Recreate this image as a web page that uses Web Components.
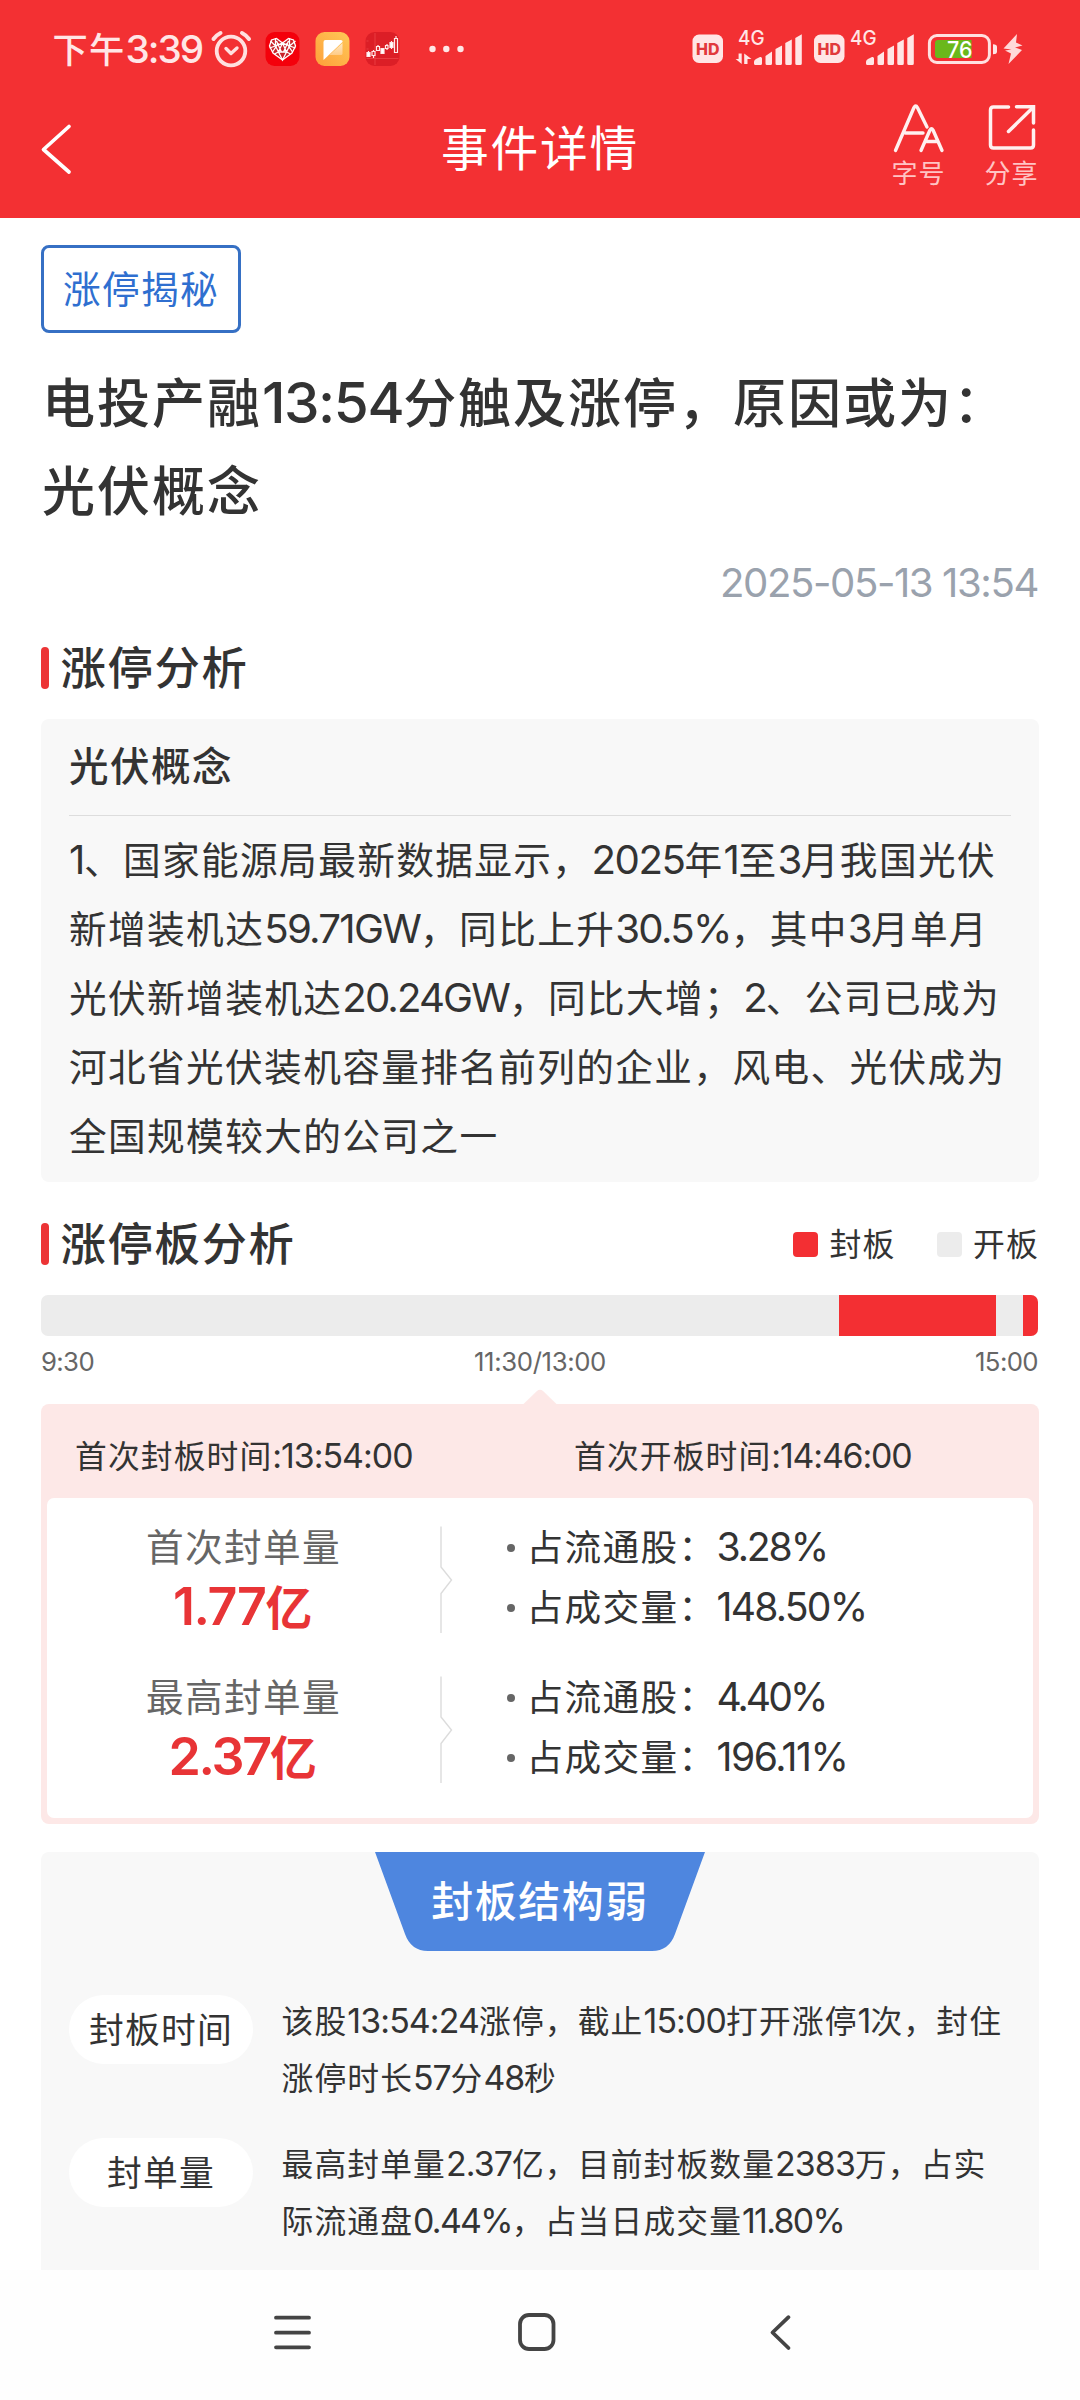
<!DOCTYPE html>
<html lang="zh-CN">
<head>
<meta charset="utf-8">
<title>事件详情</title>
<style>
html,body{margin:0;padding:0;background:#fff}
body{width:1080px;height:2400px;overflow:hidden;font-family:"Noto Sans CJK SC",sans-serif;color:#333}
</style>
</head>
<body>
<event-page></event-page>
<script>
const define=(name,html,init)=>{
  const tpl=document.createElement('template');
  tpl.innerHTML=html;
  customElements.define(name,class extends HTMLElement{
    constructor(){super();this.attachShadow({mode:'open'}).append(tpl.content.cloneNode(true));}
    connectedCallback(){if(init)init(this,this.shadowRoot);}
  });
};

/* One line of mixed text. p: advance of a Chinese character, h: box height,
   w: total width, reached by tracking the Latin runs. */
define('mix-text',`<style>
:host{display:block;white-space:nowrap;flex:none}
.line{display:inline-block;vertical-align:top;white-space:pre}
.l{font-family:Inter,"Noto Sans CJK SC",sans-serif;line-height:0}
</style><span class="line"></span>`,(el,root)=>{
  const text=el.getAttribute('text');
  if(!text)return;
  const p=+el.getAttribute('p'),h=+el.getAttribute('h'),w=+el.getAttribute('w'),k=+(el.getAttribute('k')||1.03);
  const line=root.querySelector('.line');
  line.textContent='';
  el.style.height=h+'px';
  line.style.fontSize=p*.965+'px';
  line.style.letterSpacing=p*.035+'px';
  line.style.lineHeight=h-p*.11+'px';
  const latin=[];let n=0;
  for(const part of text.match(/[\x20-\x7e]+|[^\x20-\x7e]+/g)){
    const s=document.createElement('span');
    s.textContent=part;
    if(/[\x20-\x7e]/.test(part)){s.className='l';s.style.fontSize=p*k+'px';s.style.letterSpacing='0';latin.push(s);n+=part.length;}
    line.append(s);
  }
  if(w&&n){
    const d=(w-line.getBoundingClientRect().width)/n;
    latin.forEach(s=>s.style.letterSpacing=d+'px');
  }
});

define('status-bar',`<style>
:host{display:flex;height:97px;color:#ffe6e6;align-items:flex-start}
mix-text{margin:31px 0 0 52.5px;width:152px;font-weight:500}
svg{display:block;flex:none}
.r{margin-left:auto}
text{font-family:Inter,sans-serif}
</style>
<mix-text text="下午3:39" p="36.5" h="37" w="149.500" k="1.06"></mix-text>
<svg width="270" height="97" viewBox="204.5 0 270 97" fill="none">
 <g stroke="#ffe0e0" stroke-linecap="round" stroke-linejoin="round">
  <circle cx="230.5" cy="51" r="14.3" stroke-width="3.8"/>
  <path d="M225.5 48.5l5 5 6-5.5" stroke-width="3.4"/>
  <path d="M213 39q3-4 7-6M248.500 39q-3-4-7-6" stroke-width="4"/>
 </g>
 <rect x="265" y="32" width="34" height="34" rx="9" fill="#f4000b"/>
 <g stroke="#fff" stroke-width="1.300">
  <path fill="#c9232a" d="M282 60l-9.500-7-3.500-7 2-6 5-1.500 6 4.500 6-4.500 5 1.500 2 6-3.500 7z"/>
  <path d="M270 41l5 5 7-3 7 3 6-5M269 48l6-2 3 6 4-9 4 9 3-6 6 2M274 54l4-2h8l4 2M278 52l4 8 4-8M275 38v8M289 38v8M276 41l5 11M288 41l-5 11M272 52l6-9M292 52l-6-9"/>
 </g>
 <defs><linearGradient id="o" x1="0" y1="1" x2="1" y2="0"><stop offset="0" stop-color="#fea03a"/><stop offset="1" stop-color="#ffc857"/></linearGradient>
 <linearGradient id="q" x1="0" y1="0" x2="0" y2="1"><stop offset="0" stop-color="#ffe9c4"/><stop offset="1" stop-color="#ffcb86"/></linearGradient></defs>
 <rect x="315" y="32" width="34" height="34" rx="9" fill="url(#o)"/>
 <path d="M342 43v10.500q0 1.500-1.500 1.500H329z" fill="url(#q)"/>
 <path d="M323 42q0-2 2-2h15q2.500 0 2 2L323 60z" fill="#fff"/>
 <rect x="365" y="32" width="34" height="34" rx="9" fill="#dc1e26"/>
 <path d="M374.500 33v32M366 58.500h32M366 41h2M366 49h2" stroke="#ee4348" stroke-width=".8"/>
 <g stroke="#ffe9e9" stroke-width="1.200">
  <path d="M368 51v2M373 50v8M377.500 45v6M386.500 44v6M391 41v8M395.500 36v17"/>
  <path fill="#fff" d="M366.500 52.500h3v4h-3zM380.500 48.500h3v5h-3zM389.500 42.500h3v5h-3z"/>
  <path fill="#dc1e26" d="M371.500 51.500h3v4h-3zM376 46.500h3v4h-3zM385 45.500h2.500v3h-2.500zM394 38.500h3v14h-3z"/>
 </g>
 <g fill="#ffe6e6"><circle cx="432" cy="49" r="3.200"/><circle cx="445.800" cy="49" r="3.200"/><circle cx="460" cy="49" r="3.200"/></g>
</svg>
<svg class="r" width="400" height="97" viewBox="680 0 400 97" fill="#ffe6e6">
 <rect x="692.500" y="34.500" width="30.500" height="28.500" rx="6.500"/>
 <text x="707.800" y="54.700" font-size="15.500" font-weight="800" fill="#e1393c" text-anchor="middle" textLength="23.500" lengthAdjust="spacingAndGlyphs">HD</text>
 <text x="738" y="45" font-size="20" font-weight="500" textLength="26.500" lengthAdjust="spacingAndGlyphs">4G</text>
 <path d="M741.700 53.500V64L735.600 59h3v-5.500zM744.200 64V53.500l7.300 5.500h-4v5z"/>
 <path d="M754 62q0-2 2-3l4-2q2-.5 2 1.500V63.500q0 1.500-1.500 1.500H755.500q-1.500 0-1.500-1.500zM765.500 56l6.500-4.500V63.500q0 1.500-1.500 1.500H767q-1.500 0-1.500-1.500zM775.500 49l6.500-3.500v18q0 1.500-1.500 1.500H777q-1.500 0-1.500-1.500zM785.300 43l6.500-3.500v24q0 1.500-1.500 1.500H786.800q-1.500 0-1.500-1.500zM795.300 38l6.500-3.800v29.300q0 1.500-1.500 1.500H796.800q-1.500 0-1.500-1.500z"/>
 <rect x="814" y="34.500" width="30.500" height="28.500" rx="6.500"/>
 <text x="829.200" y="54.700" font-size="15.500" font-weight="800" fill="#e1393c" text-anchor="middle" textLength="23.500" lengthAdjust="spacingAndGlyphs">HD</text>
 <text x="850" y="45" font-size="20" font-weight="500" textLength="26.500" lengthAdjust="spacingAndGlyphs">4G</text>
 <path transform="translate(112 0)" d="M754 62q0-2 2-3l4-2q2-.5 2 1.500V63.500q0 1.500-1.500 1.500H755.500q-1.500 0-1.500-1.500zM765.500 56l6.500-4.500V63.500q0 1.500-1.500 1.500H767q-1.500 0-1.500-1.500zM775.500 49l6.500-3.500v18q0 1.500-1.500 1.500H777q-1.500 0-1.500-1.500zM785.300 43l6.500-3.500v24q0 1.500-1.500 1.500H786.800q-1.500 0-1.500-1.500zM795.300 38l6.500-3.800v29.300q0 1.500-1.500 1.500H796.800q-1.500 0-1.500-1.500z"/>
 <rect x="929.400" y="35.500" width="60" height="27" rx="7.500" fill="none" stroke="#ffe0e0" stroke-width="3"/>
 <path d="M938 40h33.500v18H938q-3 0-3-3V43q0-3 3-3z" fill="#6ab81b"/>
 <path d="M993 44.300q4 0 4 2.500v5q0 2.500-4 2.500z"/>
 <text x="947" y="58" font-size="23.500" font-weight="500" fill="#fff" textLength="25.500" lengthAdjust="spacingAndGlyphs">76</text>
 <path d="M1017 34l-13.500 14.500 8 1-6.500 1 6 3L1008.500 64l13.500-14-7-2.500 7.500-2-6.500-3z" fill="#ffd9d9"/>
</svg>`);

define('nav-header',`<style>
:host{display:flex;height:120.500px;color:#fff}
.side{flex:1 1 0;min-width:0;display:flex;box-sizing:border-box}
.left{padding-right:42px}
.right{justify-content:flex-end;gap:40px;padding-right:42px}
.title{margin-top:22px}
.act{display:flex;flex-direction:column;align-items:center;width:53px;color:#ffc4c4}
svg{display:block}
.back{margin:24px 0 0 38px}
.act svg{margin-top:4px}
.act mix-text{margin-top:4px}
</style>
<div class="side left"><svg class="back" width="36" height="56" fill="none" stroke="#fff" stroke-width="3.700" stroke-linecap="round" stroke-linejoin="round"><path d="M31 5.500L5.500 28.500 31 51"/></svg></div>
<mix-text class="title" text="事件详情" p="49.500" h="60"></mix-text>
<div class="side right">
 <div class="act"><svg width="53" height="54" fill="none" stroke="#fff0f0" stroke-width="3.400" stroke-linecap="round" stroke-linejoin="round"><path d="M3.500 49.500L22 6.500q1.700-3 3.400 0L35 26M13.500 32H31M29 49.500l9-20.500q1.500-2.500 3 0l9 20.500M33.500 40.500h12"/></svg><mix-text text="字号" p="27" h="30"></mix-text></div>
 <div class="act"><svg width="53" height="54" fill="none" stroke="#fff0f0" stroke-width="3.500"><path d="M23.500 6H8.500Q5.500 6 5.500 9V44q0 3 3 3h37q3 0 3-3V29" stroke-linecap="round"/><path d="M31.500 5.800H48.500V22" stroke-linecap="round"/><path d="M47.500 7L23.500 30.500" stroke-linecap="round"/></svg><mix-text text="分享" p="27" h="30"></mix-text></div>
</div>`);

define('section-title',`<style>
:host{display:flex;align-items:center;height:50px}
i{width:8px;height:42px;border-radius:4px;background:#ec3436;margin-right:11.500px}
mix-text{font-weight:500}
slot{display:block}
.end{margin-left:auto;display:flex;align-items:center}
</style><i></i><mix-text p="47" h="50"></mix-text><div class="end"><slot></slot></div>`,(el,root)=>{
  const t=root.querySelector('mix-text');
  t.setAttribute('text',el.getAttribute('text'));
  t.connectedCallback();
});

define('legend-item',`<style>
:host{display:inline-flex;align-items:center;height:40px;margin-left:41px}
i{width:25px;height:25px;border-radius:4px;background:var(--c);margin-right:11.500px}
</style><i></i><slot></slot>`);

define('time-bar',`<style>
:host{display:block}
.bar{display:flex;height:41px;width:997px;border-radius:7px;overflow:hidden;background:#ececec}
.bar b{background:#f32f33}
.t{display:flex;justify-content:space-between;margin-top:11px;color:#666;width:997px}
.mid{margin-right:-11px}
</style>
<div class="bar"><span style="width:798px"></span><b style="width:157px"></b><span style="width:27px"></span><b style="width:15px"></b></div>
<div class="t"><mix-text text="9:30" p="25" h="30" w="53"></mix-text><mix-text class="mid" text="11:30/13:00" p="25" h="30" w="132"></mix-text><mix-text text="15:00" p="25" h="30" w="63"></mix-text></div>`);

define('seal-row',`<style>
:host{display:flex;height:150px}
.l{width:393px;display:flex;flex-direction:column;align-items:center}
.l slot{display:block}
svg{display:block;flex:none;margin-top:8px}
.r{margin-left:54px}
.i{display:flex;align-items:center;height:60px}
.i u{width:8px;height:8px;border-radius:50%;background:#666;margin-right:11.500px}
</style>
<div class="l"><slot name="label"></slot><slot name="value"></slot></div>
<svg width="13" height="108" fill="none" stroke="#dcdcdc" stroke-width="1.400"><path d="M1 .5V41L11.500 54 1 67.500V107"/></svg>
<div class="r"><div class="i"><u></u><slot name="x"></slot></div><div class="i"><u></u><slot name="y"></slot></div></div>`);

define('seal-panel',`<style>
:host{display:block}
svg{display:block;margin:0 auto}
.box{background:#fde8e7;border-radius:8px;padding:0 6px 6px}
.head{display:flex;height:94px}
.head mix-text{margin:30px 0 0}
.head .first{margin-left:28px;width:499px}
.white{background:#fff;border-radius:7px;padding-top:20px;height:300px}
.v{color:#e83436;font-weight:600}
.k{color:#666}
</style>
<svg width="36" height="15"><path d="M1 15.500L15 2q3-2.500 6 0L35 15.500z" fill="#fde8e7"/></svg>
<div class="box">
<div class="head"><mix-text class="first" text="首次封板时间:13:54:00" p="32.900" h="44" w="337.500"></mix-text><mix-text text="首次开板时间:14:46:00" p="32.900" h="44" w="337.500"></mix-text></div>
<div class="white">
<seal-row><mix-text slot="label" class="k" text="首次封单量" p="39" h="58"></mix-text><mix-text slot="value" class="v" text="1.77亿" p="48.500" h="64" w="141" k="1.07"></mix-text>
<mix-text slot="x" text="占流通股：3.28%" p="38" h="58" w="300.500"></mix-text><mix-text slot="y" text="占成交量：148.50%" p="38" h="58" w="340"></mix-text></seal-row>
<seal-row><mix-text slot="label" class="k" text="最高封单量" p="39" h="58"></mix-text><mix-text slot="value" class="v" text="2.37亿" p="48.500" h="64" w="150" k="1.07"></mix-text>
<mix-text slot="x" text="占流通股：4.40%" p="38" h="58" w="299"></mix-text><mix-text slot="y" text="占成交量：196.11%" p="38" h="58" w="321"></mix-text></seal-row>
</div></div>`);

define('fact-row',`<style>
:host{display:flex;padding:0 28px;height:143px}
.pill{width:184px;height:69px;border-radius:34.500px;background:#fff;display:flex;justify-content:center;align-items:center;margin-right:28.500px;flex:none}
.d{margin-top:-2px}
</style><div class="pill"><slot name="k"></slot></div><div class="d"><slot></slot></div>`);

define('strength-card',`<style>
:host{display:block;background:#f8f8f8;border-radius:8px 8px 0 0;height:418px;overflow:hidden}
.badge{width:330px;height:99px;margin:0 auto 44px;display:grid;justify-items:center;color:#fff;font-weight:500}
.badge>*{grid-area:1/1}
.badge mix-text{margin-top:20px}
</style>
<div class="badge"><svg width="330" height="99"><path d="M0 0H330L300 82Q294 99 277 99H53Q36 99 30 82z" fill="#4e86df"/></svg><mix-text text="封板结构弱" p="43.500" h="58"></mix-text></div>
<fact-row><mix-text slot="k" text="封板时间" p="36" h="60"></mix-text><mix-text text="该股13:54:24涨停，截止15:00打开涨停1次，封住" p="32.900" h="57" w="720.500"></mix-text><mix-text text="涨停时长57分48秒" p="32.900" h="57" w="275.500"></mix-text></fact-row>
<fact-row><mix-text slot="k" text="封单量" p="36" h="60"></mix-text><mix-text text="最高封单量2.37亿，目前封板数量2383万，占实" p="32.900" h="57" w="705"></mix-text><mix-text text="际流通盘0.44%，占当日成交量11.80%" p="32.900" h="57" w="562.500"></mix-text></fact-row>`);

define('reason-card',`<style>
:host{display:block;box-sizing:border-box;background:#f8f8f8;border-radius:8px;height:463px;padding:20px 28px 0}
.h{font-weight:500;border-bottom:1px solid #ddd;padding-bottom:21px;margin-bottom:10px}
</style>
<mix-text class="h" text="光伏概念" p="41" h="55"></mix-text>
<mix-text text="1、国家能源局最新数据显示，2025年1至3月我国光伏" p="39.050" h="69" w="927"></mix-text>
<mix-text text="新增装机达59.71GW，同比上升30.5%，其中3月单月" p="39.050" h="69" w="919"></mix-text>
<mix-text text="光伏新增装机达20.24GW，同比大增；2、公司已成为" p="39.050" h="69" w="931"></mix-text>
<mix-text text="河北省光伏装机容量排名前列的企业，风电、光伏成为" p="39.030" h="69"></mix-text>
<mix-text text="全国规模较大的公司之一" p="39.050" h="69"></mix-text>`);

define('system-nav',`<style>
:host{display:flex;height:130px;background:#fefefe}
svg{display:block}
</style><svg width="1080" height="130" fill="none" stroke="#444" stroke-width="3.800" stroke-linecap="round" stroke-linejoin="round">
<path d="M276 47.700h33M276 62.700h33M276 77.300h33"/><rect x="520" y="45" width="33.500" height="34" rx="9"/><path d="M788.500 47.200L772.500 62.500l16 15.500"/></svg>`);

define('event-page',`<style>
:host{display:block;width:1080px;height:2400px}
.top{background:#f33033}
main{display:flow-root;padding:0 41px;height:2052.500px;box-sizing:border-box}
.tag{box-sizing:border-box;width:200px;height:88px;border:3px solid #3670c4;border-radius:8px;margin-top:27.500px;display:flex;align-items:center;justify-content:center;color:#2f6fd0}
.title{margin:26px 0 0 1px;font-weight:500}
.date{display:flex;justify-content:flex-end;color:#9aa2ad;margin:28px 1px 0 0}
.s1{margin:40px 0 26px}
.s2{margin:37px 0 26px}
.panel{margin-top:12px}
.card{margin-top:28px}
</style>
<div class="top"><status-bar></status-bar><nav-header></nav-header></div>
<main>
<div class="tag"><mix-text text="涨停揭秘" p="39" h="60"></mix-text></div>
<div class="title"><mix-text text="电投产融13:54分触及涨停，原因或为：" p="55" h="88" w="966"></mix-text><mix-text text="光伏概念" p="55" h="88"></mix-text></div>
<div class="date"><mix-text text="2025-05-13 13:54" p="39" h="40" w="318"></mix-text></div>
<section-title class="s1" text="涨停分析"></section-title>
<reason-card></reason-card>
<section-title class="s2" text="涨停板分析"><legend-item style="--c:#f32f33"><mix-text text="封板" p="33" h="40"></mix-text></legend-item><legend-item style="--c:#ececec"><mix-text text="开板" p="33" h="40"></mix-text></legend-item></section-title>
<time-bar></time-bar>
<seal-panel class="panel"></seal-panel>
<strength-card class="card"></strength-card>
</main>
<system-nav></system-nav>`);
</script>
</body>
</html>
